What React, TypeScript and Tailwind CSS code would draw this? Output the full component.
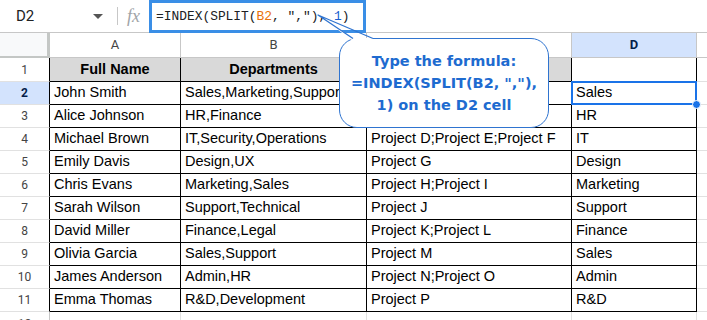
import React from 'react';

type Row = { n: number; a: string; b: string; c: string; d: string };

const rows: Row[] = [
  { n: 2, a: 'John Smith', b: 'Sales,Marketing,Support', c: 'Project A;Project B', d: 'Sales' },
  { n: 3, a: 'Alice Johnson', b: 'HR,Finance', c: 'Project C', d: 'HR' },
  { n: 4, a: 'Michael Brown', b: 'IT,Security,Operations', c: 'Project D;Project E;Project F', d: 'IT' },
  { n: 5, a: 'Emily Davis', b: 'Design,UX', c: 'Project G', d: 'Design' },
  { n: 6, a: 'Chris Evans', b: 'Marketing,Sales', c: 'Project H;Project I', d: 'Marketing' },
  { n: 7, a: 'Sarah Wilson', b: 'Support,Technical', c: 'Project J', d: 'Support' },
  { n: 8, a: 'David Miller', b: 'Finance,Legal', c: 'Project K;Project L', d: 'Finance' },
  { n: 9, a: 'Olivia Garcia', b: 'Sales,Support', c: 'Project M', d: 'Sales' },
  { n: 10, a: 'James Anderson', b: 'Admin,HR', c: 'Project N;Project O', d: 'Admin' },
  { n: 11, a: 'Emma Thomas', b: 'R&D,Development', c: 'Project P', d: 'R&D' },
];

const grid = 'grid grid-cols-[50px_131px_186px_205px_125px_1fr]';
const cell = 'h-[23px] border-r border-b border-black px-[4px] flex items-center overflow-hidden whitespace-nowrap text-[14.5px] text-black';
const rowNum = 'h-[23px] border-r border-b flex items-center justify-center text-[12px]';

export default function App() {
  return (
    <div className="relative w-[707px] h-[320px] overflow-hidden bg-white font-['Liberation_Sans',Arial,sans-serif]">
      {/* formula bar */}
      <div className="flex items-center h-[33px] border-b border-[#c7c7c7]">
        <div className="w-[117px] flex items-center pl-[16px] pr-[14px] justify-between">
          <span className="text-[15px] text-[#202124] font-['Roboto',sans-serif]">D2</span>
          <span className="w-0 h-0 border-l-[5px] border-r-[5px] border-t-[5px] border-l-transparent border-r-transparent border-t-[#555]" />
        </div>
        <div className="w-px h-[18px] bg-[#c7c7c7]" />
        <div className="w-[31px] text-center text-[18px] italic text-[#a0a4a8] font-['Liberation_Serif',serif]">fx</div>
        <div className="h-[33px] w-[217px] border-[3px] border-[#3a8ee6] flex items-center pl-[4px] self-start font-['Liberation_Mono',monospace] text-[12.9px] text-[#202124] whitespace-nowrap">
          <span>=INDEX(SPLIT(</span>
          <span className="text-[#e8710a]">B2</span>
          <span>,&nbsp;",")</span>
          <span>,&nbsp;</span>
          <span className="text-[#1a5fd0]">1</span>
          <span>)</span>
        </div>
      </div>

      {/* column headers */}
      <div className={`${grid} h-[25px] text-[13px] font-['Roboto',sans-serif]`}>
        <div className="bg-[#f8f9fa] border-r-[3px] border-b-[2px] border-[#c4c7c5]" />
        {['A', 'B', 'C'].map(l => (
          <div key={l} className="flex items-center justify-center border-r border-b border-[#c7c7c7] text-[#444]">{l}</div>
        ))}
        <div className="flex items-center justify-center border-r border-b border-[#c7c7c7] bg-[#d3e3fd] text-[#041e49] font-bold">D</div>
        <div className="border-b border-[#c7c7c7]" />
      </div>

      {/* row 1 */}
      <div className={grid}>
        <div className={`${rowNum} h-[24px] border-r-black border-b-[#e1e1e1] text-[#444] font-['Roboto',sans-serif]`}>1</div>
        <div className={`${cell} h-[24px] justify-center font-bold bg-[#d9d9d9]`}>Full Name</div>
        <div className={`${cell} h-[24px] justify-center font-bold bg-[#d9d9d9]`}>Departments</div>
        <div className={`${cell} h-[24px] justify-center font-bold bg-[#d9d9d9]`}>Projects</div>
        <div className={`${cell} h-[24px]`} />
        <div className="h-[24px] border-b border-[#e1e1e1]" />
      </div>

      {rows.map(r => (
        <div key={r.n} className={grid}>
          <div
            className={`${rowNum} border-r-black border-b-[#e1e1e1] font-['Roboto',sans-serif] ${
              r.n === 2 ? 'bg-[#d3e3fd] font-bold text-[#041e49]' : 'text-[#444]'
            }`}
          >
            {r.n}
          </div>
          <div className={cell}>{r.a}</div>
          <div className={cell}>{r.b}</div>
          <div className={cell}>{r.c}</div>
          <div className={`${cell} ${r.n === 2 ? 'relative overflow-visible' : ''}`}>
            {r.d}
            {r.n === 2 && (
              <>
                <div className="absolute left-[-1px] top-[-1px] right-[-1px] bottom-[-1px] border-2 border-[#1a73e8]" />
                <div className="absolute right-[-5px] bottom-[-5px] w-[9px] h-[9px] rounded-full bg-[#1a73e8] border border-white" />
              </>
            )}
          </div>
          <div className="h-[23px] border-b border-[#e1e1e1]" />
        </div>
      ))}

      {/* row 12 */}
      <div className={grid}>
        <div className={`${rowNum} border-[#c7c7c7] text-[#444] font-['Roboto',sans-serif] items-start pt-[3px]`}>12</div>
        <div className="h-[23px] border-r border-[#e1e1e1]" />
        <div className="h-[23px] border-r border-[#e1e1e1]" />
        <div className="h-[23px] border-r border-[#e1e1e1]" />
        <div className="h-[23px] border-r border-[#e1e1e1]" />
        <div />
      </div>

      {/* callout */}
      <div className="absolute left-[339px] top-[38px] w-[210px] h-[90px] rounded-[18px] border-[1.5px] border-[#2f74d0] bg-white flex flex-col items-center justify-center text-[14.5px] leading-[22px] font-bold text-[#1e6bd0] font-['DejaVu_Sans',sans-serif] whitespace-nowrap">
        <span>Type the formula:</span>
        <span>=INDEX(SPLIT(B2, ","),</span>
        <span>1) on the D2 cell</span>
      </div>
      <svg className="absolute left-[310px] top-[10px]" width="70" height="32" viewBox="0 0 70 32">
        <polygon points="8,5 43,28 63,28 63,31 43,31" fill="white" />
        <polyline points="43,28.5 8,5 63,28.5" fill="none" stroke="#2f74d0" strokeWidth="1.3" strokeLinejoin="round" />
      </svg>
    </div>
  );
}
